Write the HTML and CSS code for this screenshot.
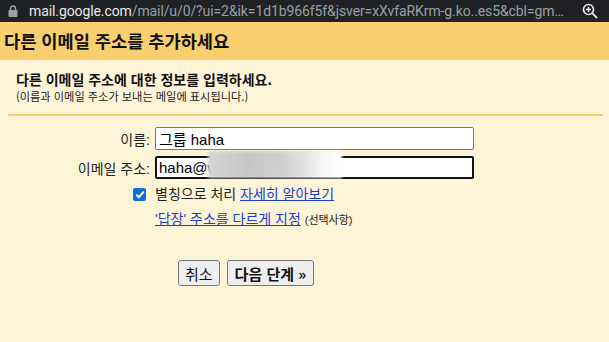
FILE: index.html
```html
<!DOCTYPE html>
<html lang="ko">
<head>
<meta charset="utf-8">
<link rel="stylesheet" href="styles.css">
</head>
<body>
<div class="urlbar">
  <svg class="lock" width="10" height="12" viewBox="0 0 10 12"><path d="M2.5 5V3.5a2.5 2.5 0 0 1 5 0V5" fill="none" stroke="#9aa0a6" stroke-width="1.5"/><rect x="0.5" y="5" width="9" height="7" rx="1" fill="#9aa0a6"/></svg>
  <span class="url"><span class="host">mail.google.com</span><span class="path">/mail/u/0/?ui=2&amp;ik=1d1b966f5f&amp;jsver=xXvfaRKrm-g.ko..es5&amp;cbl=gm…</span></span>
  <svg class="zoomicon" width="16" height="16" viewBox="0 0 16 16"><circle cx="6.5" cy="6.5" r="5" fill="none" stroke="#e8eaed" stroke-width="1.6"/><path d="M10.2 10.2 15 15" stroke="#e8eaed" stroke-width="1.8"/><path d="M4 6.5h5M6.5 4v5" stroke="#e8eaed" stroke-width="1.4"/></svg>
</div>
<div class="title">다른 이메일 주소를 추가하세요</div>
<div class="panel">
  <div class="intro">
    <div class="lead">다른 이메일 주소에 대한 정보를 입력하세요.</div>
    <div class="note">(이름과 이메일 주소가 보내는 메일에 표시됩니다.)</div>
  </div>
  <div class="rule"></div>
  <div class="form">
    <label class="lbl">이름:</label>
    <div class="field"><input class="inp" type="text" value="그룹 haha"></div>
    <label class="lbl">이메일 주소:</label>
    <div class="field focus"><input class="inp inp-focus" type="text" value="haha@w"><div class="blur"></div></div>
    <div class="chkcell"><span class="chk"><svg width="10" height="9" viewBox="0 0 10 9"><path d="M1.2 4.6 3.8 7.2 8.8 1.6" fill="none" stroke="#fff" stroke-width="2"/></svg></span></div>
    <div class="opt">별칭으로 처리 <a href="#">자세히 알아보기</a></div>
    <div></div>
    <div class="opt2"><a href="#">'답장' 주소를 다르게 지정</a> <span class="small">(선택사항)</span></div>
  </div>
  <div class="buttons">
    <button class="btn">취소</button>
    <button class="btn btn-bold">다음 단계 »</button>
  </div>
</div>
</body>
</html>
```
FILE: styles.css
```css
html, body { margin: 0; padding: 0; }
body {
  width: 609px;
  height: 342px;
  overflow: hidden;
  background: #fef5d8;
  font-family: "Liberation Sans", "Noto Sans CJK KR", sans-serif;
  color: #202020;
}
.urlbar {
  height: 22px;
  background: #202124;
  display: flex;
  align-items: center;
  padding: 0 0 0 8px;
  font-family: Roboto, "Liberation Sans", sans-serif;
  font-size: 14px;
  letter-spacing: -0.1px;
  white-space: nowrap;
  overflow: hidden;
}
.lock { flex: none; margin-right: 11px; }
.url { flex: 1; overflow: hidden; }
.host { color: #e8eaed; }
.path { color: #9aa0a6; }
.zoomicon { flex: none; margin: 0 11px 0 8px; }
.title {
  height: 38px;
  background: #f9cf6f;
  padding-left: 4px;
  font-family: "Noto Sans CJK KR", sans-serif;
  font-weight: bold;
  font-size: 17.6px;
  line-height: 38px;
  color: #111;
}
.panel { padding: 0 6px 0 8px; }
.intro { padding: 9px 0 0 8px; box-sizing: border-box; height: 54px; }
.lead {
  font-family: "Noto Sans CJK KR", sans-serif;
  font-weight: bold;
  font-size: 14px;
  line-height: 20px;
  color: #111;
}
.note {
  font-family: "Noto Sans CJK KR", sans-serif;
  font-size: 11.2px;
  line-height: 14px;
  color: #222;
}
.rule { height: 2px; background: #f9cf6f; }
.form {
  display: grid;
  grid-template-columns: 142px 319px;
  column-gap: 5px;
  row-gap: 6px;
  margin-top: 11px;
  align-items: center;
}
.lbl {
  justify-self: end;
  font-size: 14px;
  color: #222;
}
.field { position: relative; height: 23px; }
.inp {
  box-sizing: border-box;
  width: 319px;
  height: 23px;
  border: 1px solid #767676;
  border-radius: 2px;
  padding: 0 3px;
  margin: 0;
  background: #fff;
  font-family: "Liberation Sans", "Noto Sans CJK KR", sans-serif;
  font-size: 15px;
  color: #000;
  outline: none;
}
.inp-focus { border: 2px solid #111; padding: 0 2px; }
.blur {
  position: absolute;
  left: 53px;
  top: -5px;
  width: 134px;
  height: 27px;
  background: linear-gradient(90deg, #d6d6d6 0%, #c6c6c6 30%, #cfcfcf 55%, #e2e2e2 72%, #f8f8f8 88%, #ffffff 100%);
  filter: blur(1.5px);
}
.chkcell { justify-self: end; margin-right: 4px; height: 18px; display: flex; align-items: center; }
.chk {
  width: 13px;
  height: 13px;
  border-radius: 2px;
  background: #0b6edb;
  display: flex;
  align-items: center;
  justify-content: center;
}
.opt { font-size: 14px; color: #222; line-height: 18px; }
.opt2 { font-size: 14px; line-height: 18px; margin-top: 1px; }
a { color: #1a3fd1; text-decoration: underline; }
.small { font-size: 11px; color: #222; }
.buttons {
  display: flex;
  gap: 7px;
  margin-top: 31px;
  padding-left: 170px;
}
.btn {
  height: 26px;
  box-sizing: border-box;
  border: 1px solid #767676;
  border-radius: 3px;
  background: #efefef;
  font-family: "Noto Sans CJK KR", sans-serif;
  font-size: 15px;
  color: #111;
  padding: 0 6px;
  margin: 0;
}
.btn-bold { font-weight: bold; padding: 0 7px; }
```
